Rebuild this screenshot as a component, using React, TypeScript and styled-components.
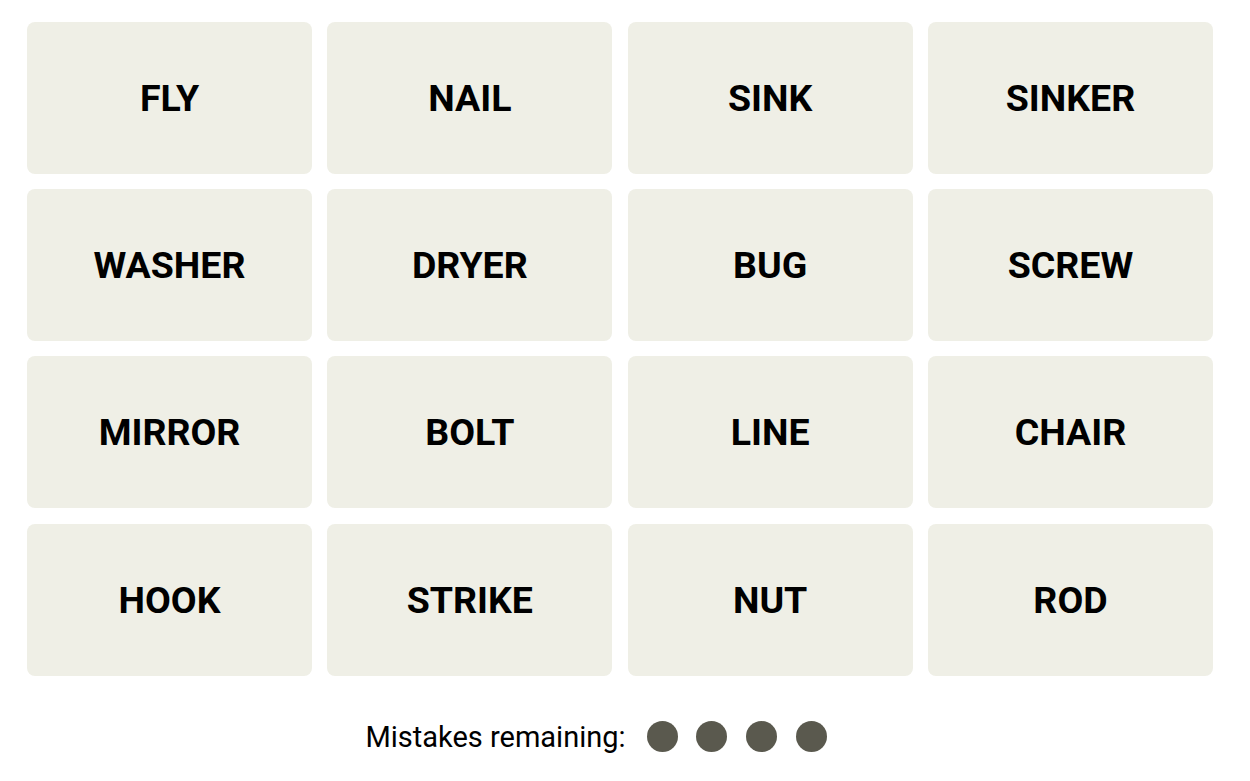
import React from "react";
import styled, { createGlobalStyle } from "styled-components";

const GlobalStyle = createGlobalStyle`
  html, body {
    margin: 0;
    padding: 0;
    background: #ffffff;
  }
  body {
    font-family: Roboto, "Liberation Sans", Arial, sans-serif;
  }
`;

const Page = styled.div`
  width: 1250px;
  height: 781px;
  box-sizing: border-box;
  padding: 22px 37px 0 27px;
  display: flex;
  flex-direction: column;
  background: #ffffff;
`;

const Board = styled.div`
  display: grid;
  grid-template-columns: repeat(4, 285px);
  grid-auto-rows: 152px;
  column-gap: 15.33px;
  row-gap: 15.2px;
`;

const Tile = styled.button`
  border: none;
  margin: 0;
  padding: 0;
  border-radius: 8px;
  background: #efefe6;
  color: #000000;
  font-family: Roboto, "Liberation Sans", Arial, sans-serif;
  font-weight: 700;
  font-size: 37.5px;
  text-transform: uppercase;
  display: flex;
  align-items: center;
  justify-content: center;
  cursor: pointer;
`;

const MistakesRow = styled.div`
  margin-top: 45px;
  height: 32px;
  display: flex;
  align-items: center;
  justify-content: center;
  padding-right: 48px;
`;

const MistakesLabel = styled.span`
  font-family: Roboto, "Liberation Sans", Arial, sans-serif;
  font-size: 29px;
  font-weight: 400;
  color: #000000;
  margin-right: 21px;
`;

const Dots = styled.div`
  display: flex;
  gap: 18.7px;
`;

const Dot = styled.span`
  width: 31px;
  height: 31px;
  border-radius: 50%;
  background: #5a594e;
  display: block;
`;

const words = [
  "FLY", "NAIL", "SINK", "SINKER",
  "WASHER", "DRYER", "BUG", "SCREW",
  "MIRROR", "BOLT", "LINE", "CHAIR",
  "HOOK", "STRIKE", "NUT", "ROD",
];

export default function App() {
  return (
    <>
      <GlobalStyle />
      <Page>
        <Board>
          {words.map((w) => (
            <Tile key={w}>{w}</Tile>
          ))}
        </Board>
        <MistakesRow>
          <MistakesLabel>Mistakes remaining:</MistakesLabel>
          <Dots>
            {[0, 1, 2, 3].map((i) => (
              <Dot key={i} />
            ))}
          </Dots>
        </MistakesRow>
      </Page>
    </>
  );
}
